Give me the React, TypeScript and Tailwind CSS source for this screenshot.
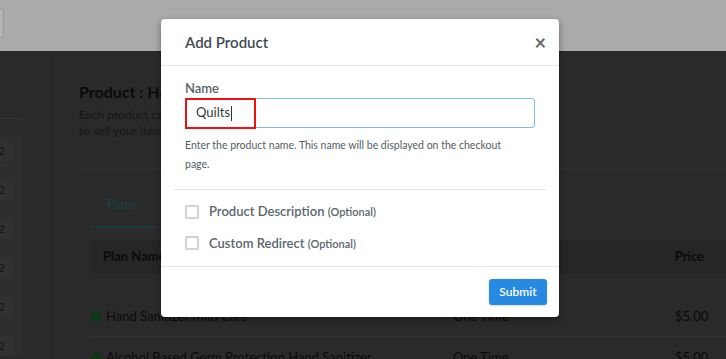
import React from "react";

export default function App() {
  const badges = [0, 1, 2, 3, 4, 5];
  return (
    <div
      className="relative w-[726px] h-[359px] overflow-hidden bg-[#2a2a2a] text-neutral-950"
      style={{ fontFamily: "Lato, 'Noto Sans', sans-serif" }}
    >
      {/* top bar */}
      <div className="h-[51px] bg-[#aaaaaa] pt-[8px]">
        <div className="w-[4px] h-[30px] bg-[#b3b3b3] border border-l-0 border-[#999999] rounded-r-[3px]" />
      </div>

      {/* page body */}
      <div className="flex h-[308px]">
        <div className="w-[51px] border-r border-[#242424] shrink-0">
          <div className="mt-[67px] w-[22px] h-px bg-[#353535]" />
          <div className="mt-[17px] w-[22px] bg-[#2e2e2e] pt-[5px] flex flex-col gap-[19px]">
            {badges.map((b) => (
              <div
                key={b}
                className="w-[13px] h-[20px] rounded-r-[4px] bg-[#313131] text-[12px] leading-[20px] text-neutral-900 overflow-hidden"
              >
                <span className="-ml-[2px]">2</span>
              </div>
            ))}
          </div>
        </div>

        <div className="flex-1 pl-[28px]">
          <div className="mt-[32px] text-[16px] font-bold text-neutral-950 leading-[18px]">
            Product : Hand Sanitizer
          </div>
          <div className="mt-[6px] text-[12px] leading-[16px] text-neutral-900">
            Each product can have multiple plans. Create a plan for each product
            <br />
            to sell your items at different prices.
          </div>
          <div className="mt-[30px] h-px bg-[#323232]" />

          <div className="pl-[12px]">
            <div className="flex mt-[22px]">
              <div className="w-[63px] h-[36px] border-b-[2px] border-[#163c3c] text-[13px] text-[#1a4242] pl-[16px] pt-[2px] leading-[20px]">
                Plans
              </div>
            </div>
            <div className="mt-[12px] h-[34px] bg-[#262626] flex items-center justify-between pl-[12px] pr-[22px] text-[13px] font-bold text-neutral-950">
              <span>Plan Name</span>
              <span>Price</span>
            </div>
            <div className="h-[63px] border-b border-[#333333] flex items-end pb-[10px] text-[13px] text-neutral-950">
              <span className="w-[10px] h-[10px] rounded-full bg-[#0b3a10] mr-[5px] mb-[4px]" />
              <span className="w-[347px]">Hand Sanitizer Mild Care</span>
              <span className="w-[222px]">One Time</span>
              <span>$5.00</span>
            </div>
            <div className="h-[30px] flex items-end text-[13px] text-neutral-950">
              <span className="w-[10px] h-[10px] rounded-full bg-[#0b3a10] mr-[5px] mb-[4px]" />
              <span className="w-[347px]">Alcohol Based Germ Protection Hand Sanitizer</span>
              <span className="w-[222px]">One Time</span>
              <span>$5.00</span>
            </div>
          </div>
        </div>
      </div>

      {/* modal */}
      <div className="absolute left-[161px] top-[19px] w-[398px] h-[298px] bg-white rounded-[4px] shadow-[0_2px_6px_rgba(0,0,0,0.4)] flex flex-col">
        <div className="h-[47px] border-b border-[#e6e6e6] flex items-center justify-between pl-[24px] pr-[13px]">
          <span className="text-[15px] font-semibold text-[#3e4b55]">Add Product</span>
          <span className="text-[#666] text-[20px] font-bold leading-none">×</span>
        </div>

        <div className="px-[12px]">
          <div className="px-[12px]">
            <div className="mt-[14px] text-[13px] font-semibold text-[#56616a] leading-[16px]">Name</div>
            <div className="relative mt-[2px] h-[30px] border border-[#7db8ee] rounded-[3px] flex items-center pl-[10px]">
              <span className="text-[13px] text-[#333b40]">Quilts</span>
              <span className="w-px h-[15px] bg-[#333] ml-[1px]" />
              <div className="absolute left-[-1px] top-[-1px] w-[71px] h-[31px] border-[2px] border-[#ee1111]" />
            </div>
            <div className="mt-[8px] text-[10.5px] leading-[19px] text-[#555d63]">
              Enter the product name. This name will be displayed on the checkout
              <br />
              page.
            </div>
          </div>
          <div className="mt-[15px] h-px bg-[#e6e6e6]" />
          <div className="px-[12px] pt-[12px] flex flex-col gap-[12px]">
            <label className="flex items-center">
              <span className="w-[14px] h-[14px] border-[2px] border-[#d3d3d3] rounded-[1px]" />
              <span className="ml-[10px] text-[13px] font-semibold text-[#5b666e]">
                Product Description <span className="text-[11px]">(Optional)</span>
              </span>
            </label>
            <label className="flex items-center">
              <span className="w-[14px] h-[14px] border-[2px] border-[#d3d3d3] rounded-[1px]" />
              <span className="ml-[10px] text-[13px] font-semibold text-[#5b666e]">
                Custom Redirect <span className="text-[11px]">(Optional)</span>
              </span>
            </label>
          </div>
        </div>

        <div className="mt-auto h-[51px] border-t border-[#e6e6e6] flex items-center justify-end pr-[12px]">
          <button className="w-[58px] h-[26px] rounded-[3px] bg-[#2689e2] text-white text-[12px] font-semibold shadow-[0_1px_2px_rgba(0,0,0,0.15)]">
            Submit
          </button>
        </div>
      </div>
    </div>
  );
}
